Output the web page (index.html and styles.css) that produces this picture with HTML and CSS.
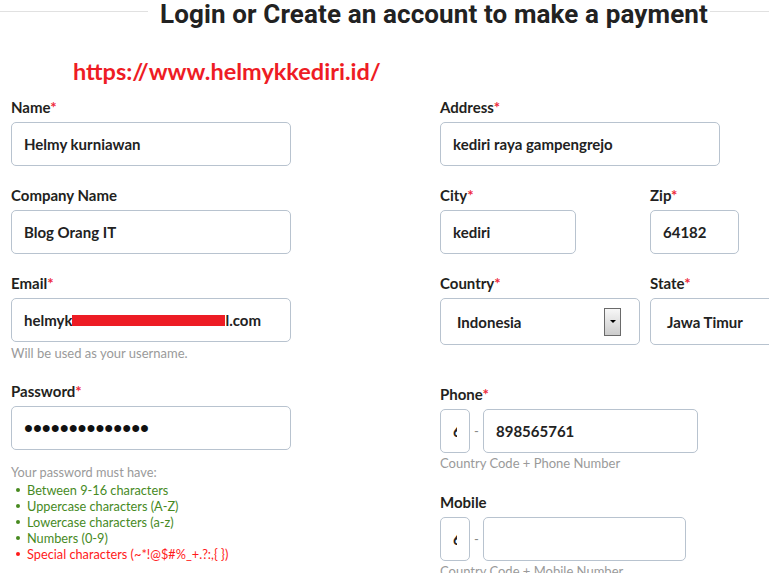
FILE: index.html
```html
<!DOCTYPE html>
<html lang="en">
<head>
<meta charset="utf-8">
<title>Login or Create an account</title>
<link rel="stylesheet" href="styles.css">
</head>
<body>
<header class="title-bar">
  <h1 class="title">Login or Create an account to make a payment</h1>
</header>
<p class="site-url">https://www.helmykkediri.id/</p>
<form class="form">
  <div class="col">
    <div class="field">
      <label class="label">Name<span class="req">*</span></label>
      <div class="input w-full">Helmy kurniawan</div>
    </div>
    <div class="field">
      <label class="label">Company Name</label>
      <div class="input w-full">Blog Orang IT</div>
    </div>
    <div class="field">
      <label class="label">Email<span class="req">*</span></label>
      <div class="input w-full">helmyk<span class="redact"></span>l.com</div>
      <p class="help help-email">Will be used as your username.</p>
    </div>
    <div class="field">
      <label class="label">Password<span class="req">*</span></label>
      <div class="input w-full"><span class="dots">••••••••••••••</span></div>
    </div>
    <div class="rules">
      <p class="rules-title">Your password must have:</p>
      <ul class="rules-list">
        <li class="ok">Between 9-16 characters</li>
        <li class="ok">Uppercase characters (A-Z)</li>
        <li class="ok">Lowercase characters (a-z)</li>
        <li class="ok">Numbers (0-9)</li>
        <li class="bad">Special characters (~*!@$#%_+.?:,{ })</li>
      </ul>
    </div>
  </div>
  <div class="col">
    <div class="field">
      <label class="label">Address<span class="req">*</span></label>
      <div class="input w-full">kediri raya gampengrejo</div>
    </div>
    <div class="row">
      <div class="field">
        <label class="label">City<span class="req">*</span></label>
        <div class="input w-city">kediri</div>
      </div>
      <div class="field">
        <label class="label">Zip<span class="req">*</span></label>
        <div class="input w-zip">64182</div>
      </div>
    </div>
    <div class="row row-country">
      <div class="field">
        <label class="label">Country<span class="req">*</span></label>
        <div class="input select w-country">Indonesia<span class="select-btn"><span class="caret"></span></span></div>
      </div>
      <div class="field">
        <label class="label">State<span class="req">*</span></label>
        <div class="input select w-state">Jawa Timur</div>
      </div>
    </div>
    <div class="field">
      <label class="label">Phone<span class="req">*</span></label>
      <div class="phone">
        <div class="input w-code"><span class="code">62</span></div>
        <span class="dash">-</span>
        <div class="input w-phone">898565761</div>
      </div>
      <p class="help">Country Code + Phone Number</p>
    </div>
    <div class="field">
      <label class="label">Mobile</label>
      <div class="phone">
        <div class="input w-code"><span class="code">62</span></div>
        <span class="dash">-</span>
        <div class="input w-mobile"></div>
      </div>
      <p class="help">Country Code + Mobile Number</p>
    </div>
  </div>
</form>
</body>
</html>
```
FILE: styles.css
```css
html, body {
  margin: 0;
  padding: 0;
  overflow: hidden;
  background: #fff;
}
body {
  font-family: Lato, "Open Sans", sans-serif;
  color: #231f20;
}
.title-bar {
  display: flex;
  height: 28px;
}
.title-bar::before {
  content: "";
  width: 148px;
  height: 1px;
  margin-top: 11px;
  background: #e1e1e1;
}
.title-bar::after {
  content: "";
  flex: 1;
  height: 1px;
  margin-top: 11px;
  background: #e1e1e1;
}
.title {
  margin: 0 2px 0 12px;
  font-family: Roboto, sans-serif;
  font-weight: 700;
  font-size: 26px;
  letter-spacing: 0.12px;
  line-height: 28px;
  color: #222;
  white-space: nowrap;
}
.site-url {
  margin: 30px 0 0 73px;
  font-family: Lato, sans-serif;
  font-weight: 700;
  font-size: 23.5px;
  line-height: 26px;
  color: #ee1c24;
}
.form {
  display: grid;
  grid-template-columns: 280px 329px;
  column-gap: 149px;
  padding-left: 11px;
  margin-top: 14px;
}
.col {
  display: flex;
  flex-direction: column;
}
.field {
  display: flex;
  flex-direction: column;
  margin-bottom: 20px;
}
.row {
  display: flex;
}
.row .field + .field {
  margin-left: 74px;
}
.row-country .field + .field {
  margin-left: 10px;
}
.row-country .field {
  margin-bottom: 40px;
}
.label {
  font-weight: 700;
  font-size: 15px;
  line-height: 18px;
  margin-bottom: 6px;
}
.req {
  color: #ee2a3a;
}
.input {
  box-sizing: border-box;
  height: 44px;
  border: 1px solid #b8c3cf;
  border-radius: 5px;
  padding: 0 12px;
  display: flex;
  align-items: center;
  font-weight: 700;
  font-size: 15px;
  color: #222;
  white-space: nowrap;
  overflow: hidden;
}
.w-full { width: 280px; }
.w-city { width: 136px; }
.w-zip { width: 89px; }
.w-country { width: 200px; }
.w-state { width: 130px; }
.w-code { width: 30px; }
.w-phone { width: 215px; }
.w-mobile { width: 203px; }
.select {
  height: 47px;
  padding-left: 16px;
}
.select-btn {
  box-sizing: border-box;
  margin-left: auto;
  margin-right: 6px;
  width: 17px;
  height: 28px;
  border: 1px solid #6a6a6a;
  background: linear-gradient(#f7f7f7, #cccccc);
  display: flex;
  align-items: center;
  justify-content: center;
}
.caret {
  width: 0;
  height: 0;
  border-left: 3px solid transparent;
  border-right: 3px solid transparent;
  border-top: 3px solid #000;
}
.redact {
  display: inline-block;
  width: 153px;
  height: 11px;
  background: #ed1c24;
}
.dots {
  font-family: "Liberation Sans", sans-serif;
  font-size: 25.5px;
  font-weight: 400;
  color: #111;
}
.help {
  margin: 2px 0 2px;
  font-size: 13px;
  line-height: 16px;
  color: #9a9a9a;
}
.help-email {
  margin: 3px 0 1px;
}
.phone {
  display: flex;
  align-items: center;
}
.code {
  display: block;
  width: 5px;
  overflow: hidden;
}
.dash {
  width: 13px;
  text-align: center;
  font-size: 13px;
  color: #888;
}
.rules {
  margin-top: -6px;
}
.rules-title {
  margin: 0 0 2px;
  font-size: 12.75px;
  line-height: 16px;
  color: #9a9a9a;
}
.rules-list {
  list-style: none;
  margin: 0;
  padding: 0;
  font-size: 12.75px;
  line-height: 16px;
}
.rules-list li {
  display: flex;
  align-items: center;
}
.rules-list li::before {
  content: "";
  width: 4px;
  height: 4px;
  border-radius: 50%;
  background: currentColor;
  margin: 0 7px 0 5px;
}
.ok { color: #478a1f; }
.bad { color: #ff1a1a; }
```
